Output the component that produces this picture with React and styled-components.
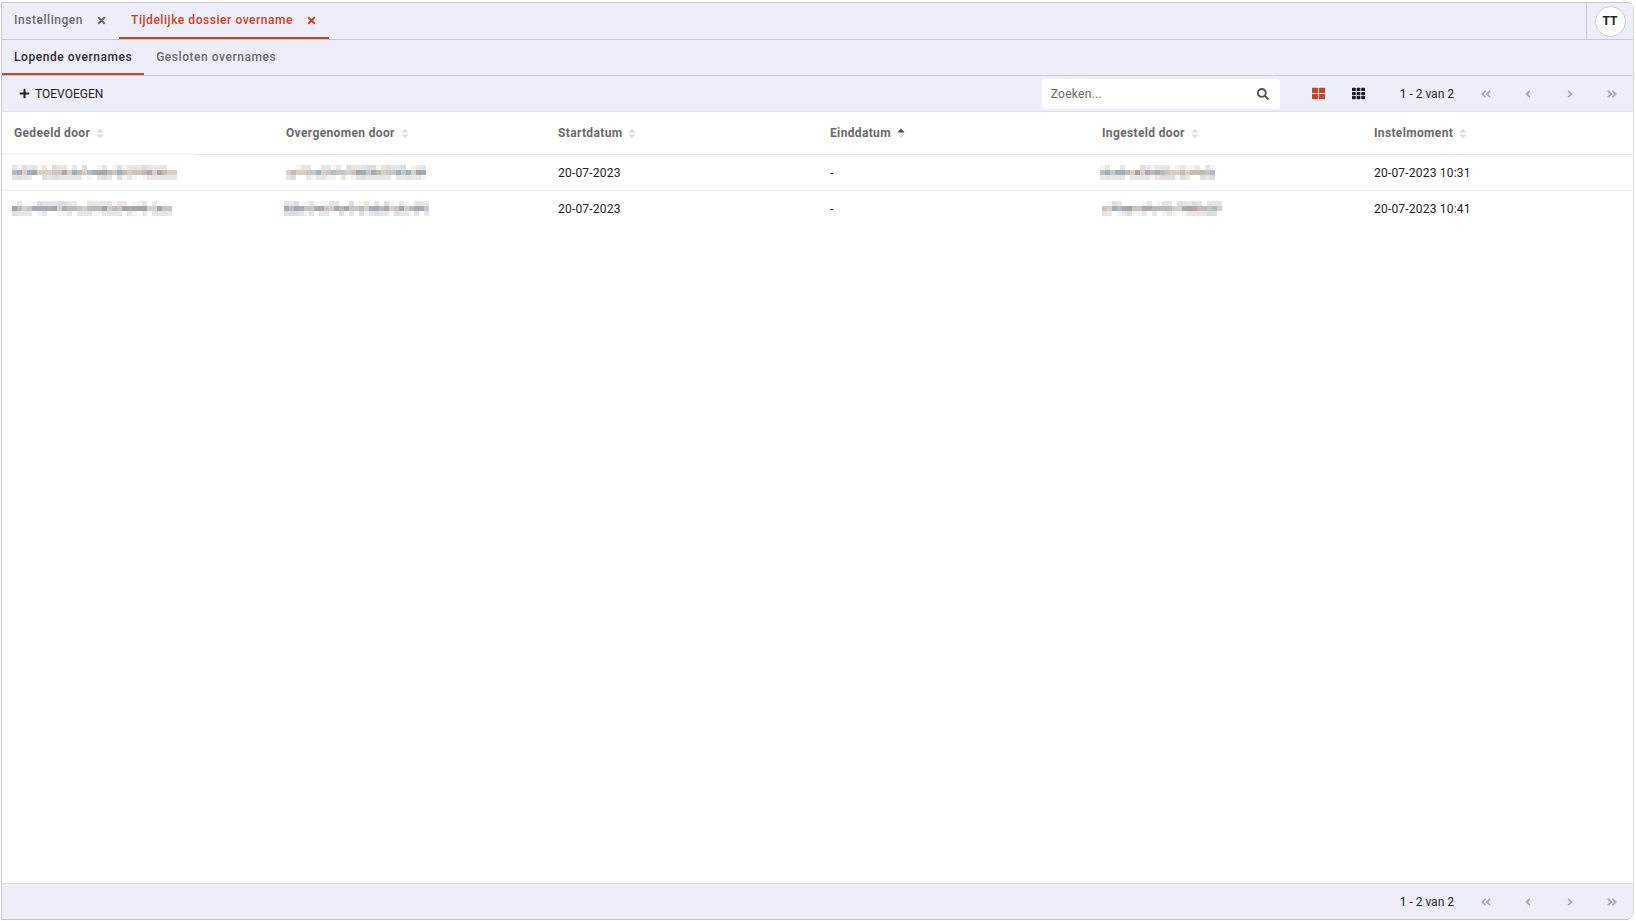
import React from 'react'
import styled, { createGlobalStyle } from 'styled-components'
import {
  FaTimes,
  FaPlus,
  FaSearch,
  FaThLarge,
  FaTh,
  FaAngleDoubleLeft,
  FaAngleDoubleRight,
  FaAngleLeft,
  FaAngleRight,
} from 'react-icons/fa'

const accent = '#c4442a'
const barBg = '#eeeef9'
const lineDark = '#c9c9d6'

const columns = ['Gedeeld door', 'Overgenomen door', 'Startdatum', 'Einddatum', 'Ingesteld door', 'Instelmoment']

const rows = [
  { shared: { seed: 3, left: -2, width: 33 }, taken: { seed: 11, left: 0, width: 28 }, start: '20-07-2023', end: '-', by: { seed: 23, left: -2, width: 23 }, moment: '20-07-2023 10:31' },
  { shared: { seed: 7, left: -2, width: 32 }, taken: { seed: 17, left: -2, width: 29 }, start: '20-07-2023', end: '-', by: { seed: 31, left: 0, width: 24 }, moment: '20-07-2023 10:41' },
]

const Global = createGlobalStyle`
  html, body {
    margin: 0;
    height: 100%;
    background: #fff;
    font-family: Roboto, "Liberation Sans", sans-serif;
    font-size: 12px;
  }
  #root { height: 100%; }
`

const Frame = styled.div`
  box-sizing: border-box;
  height: 918px;
  margin: 2px 2px 0 1px;
  display: flex;
  flex-direction: column;
  border: 1px solid ${lineDark};
  border-right-color: #dcdce4;
  border-bottom-color: #c4c4c8;
  border-radius: 0 6px 8px 0;
  overflow: hidden;
`

const TopBar = styled.div`
  display: flex;
  height: 36px;
  flex: none;
  background: ${barBg};
  border-bottom: 1px solid ${lineDark};
`

const SubBar = styled(TopBar)`
  height: 35px;
`

const Tab = styled.div`
  display: flex;
  align-items: center;
  gap: 13px;
  height: 100%;
  padding: 0 12px;
  box-sizing: border-box;
  color: ${p => (p.$active ? accent : '#6a6a6a')};
  border-bottom: 2px solid ${p => (p.$active ? accent : 'transparent')};
  font-weight: 500;
  font-size: 12px;
  letter-spacing: 0.55px;
  white-space: nowrap;
`

const SubTab = styled(Tab)`
  color: ${p => (p.$active ? '#2b2b30' : '#6a6a6a')};
`

const Close = styled(FaTimes)`
  width: 11px;
  height: 11px;
  color: ${p => (p.$active ? accent : '#666')};
`

const Spacer = styled.div`
  flex: 1;
`

const UserCell = styled.div`
  display: flex;
  align-items: center;
  justify-content: center;
  width: 46px;
  border-left: 1px solid ${lineDark};
`

const Avatar = styled.div`
  display: flex;
  align-items: center;
  justify-content: center;
  width: 31px;
  height: 31px;
  box-sizing: border-box;
  border: 1px solid ${lineDark};
  border-radius: 50%;
  background: #fff;
  color: #222;
  font-weight: 700;
  font-size: 12px;
`

const Toolbar = styled.div`
  display: flex;
  align-items: center;
  height: 36px;
  flex: none;
  box-sizing: border-box;
  background: ${barBg};
  border-bottom: 1px solid #dfdfe8;
`

const AddButton = styled.div`
  display: flex;
  align-items: center;
  gap: 5px;
  margin-left: 17px;
  color: #222;
  font-size: 12px;
`

const Search = styled.div`
  display: flex;
  align-items: center;
  justify-content: space-between;
  width: 238px;
  height: 30px;
  box-sizing: border-box;
  padding: 0 11px 0 9px;
  background: #fff;
  border-radius: 3px;
  color: #666;
  font-size: 12px;
  letter-spacing: 0.3px;
`

const ViewButton = styled.div`
  display: flex;
  margin-left: ${p => p.$gap}px;
  color: ${p => (p.$active ? accent : '#1c1c24')};
`

const PageInfo = styled.div`
  margin-left: ${p => p.$gap}px;
  color: #222;
  font-size: 12px;
  white-space: nowrap;
`

const Pager = styled.div`
  display: flex;
  align-items: center;
  gap: 30px;
  margin: 0 15px 0 26px;
  color: #a9a9b2;
`

const Table = styled.div`
  position: relative;
  flex: 1;
  background: #fff;
`

const Row = styled.div`
  display: grid;
  grid-template-columns: repeat(6, 272px);
  align-items: center;
  height: ${p => p.$height}px;
  box-sizing: border-box;
  border-bottom: 1px solid ${p => p.$line};
`

const HeaderCell = styled.div`
  display: flex;
  align-items: center;
  gap: 6px;
  padding-left: 12px;
  color: #6a6a6a;
  font-weight: 700;
  font-size: 12px;
  letter-spacing: 0.35px;
`

const Cell = styled.div`
  padding-left: 12px;
  color: #222;
  font-size: 12px;
  letter-spacing: 0.2px;
`

const HeaderStreak = styled.div`
  position: absolute;
  left: 1px;
  top: 41px;
  width: 193px;
  height: 2px;
  background: #f5f5f5;
`

const MosaicSvg = styled.svg`
  display: block;
  margin-left: ${p => p.$left}px;
`

const Footer = styled(Toolbar)`
  justify-content: flex-end;
  border-bottom: none;
  border-top: 1px solid #dfdfe8;
`

function SortIcon({ active }) {
  return (
    <svg width="8" height="11" viewBox="0 0 8 11">
      <path d="M4 0.5 7.6 4.6H0.4Z" fill={active ? '#4a4a55' : '#dcdcea'} />
      <path d="M4 10.5 7.6 6.4H0.4Z" fill="#dcdcea" />
    </svg>
  )
}

// blurred names in the screenshot, drawn as a seeded pixel block
function Mosaic({ seed, left, width }) {
  const cells = []
  let n = seed * 7919
  const next = () => {
    n = (n * 1103515245 + 12345) % 2147483648
    return n / 2147483648
  }
  const tints = ['#c9c7c4', '#b4bcc4', '#a9a5a2', '#d6d0c8', '#9fb0bd', '#c2bcb4', '#b0aab0']
  const lights = ['#f3f1ee', '#e6e8ec', '#ebe6e2', '#dedee2', '#f6f4ef', '#e2e6ea']
  for (let x = 0; x < width; x++) {
    const a = next()
    const b = next()
    const c = next()
    cells.push(
      <React.Fragment key={x}>
        {a > 0.3 && <rect x={x * 5} y={0} width={5} height={5} fill={lights[Math.floor(a * 6)]} />}
        <rect x={x * 5} y={5} width={5} height={5} fill={tints[Math.floor(b * 7)]} />
        {c > 0.2 && <rect x={x * 5} y={10} width={5} height={5} fill={lights[Math.floor(c * 6)]} />}
      </React.Fragment>
    )
  }
  return (
    <MosaicSvg $left={left} width={width * 5} height={15} viewBox={`0 0 ${width * 5} 15`}>
      {cells}
    </MosaicSvg>
  )
}

function Paging({ gap }) {
  return (
    <>
      <PageInfo $gap={gap}>1 - 2 van 2</PageInfo>
      <Pager>
        <FaAngleDoubleLeft size={12} />
        <FaAngleLeft size={12} />
        <FaAngleRight size={12} />
        <FaAngleDoubleRight size={12} />
      </Pager>
    </>
  )
}

export default function App() {
  return (
    <>
      <Global />
      <Frame>
        <TopBar>
          <Tab>
            Instellingen
            <Close />
          </Tab>
          <Tab $active>
            Tijdelijke dossier overname
            <Close $active />
          </Tab>
          <Spacer />
          <UserCell>
            <Avatar>TT</Avatar>
          </UserCell>
        </TopBar>
        <SubBar>
          <SubTab $active>Lopende overnames</SubTab>
          <SubTab>Gesloten overnames</SubTab>
        </SubBar>
        <Toolbar>
          <AddButton>
            <FaPlus size={11} />
            TOEVOEGEN
          </AddButton>
          <Spacer />
          <Search>
            Zoeken...
            <FaSearch size={12} color="#555" />
          </Search>
          <ViewButton $active $gap={32}>
            <FaThLarge size={13} />
          </ViewButton>
          <ViewButton $gap={27}>
            <FaTh size={13} />
          </ViewButton>
          <Paging gap={35} />
        </Toolbar>
        <Table>
          <HeaderStreak />
          <Row $height={43} $line="#e2e2ea">
            {columns.map(name => (
              <HeaderCell key={name}>
                {name}
                <SortIcon active={name === 'Einddatum'} />
              </HeaderCell>
            ))}
          </Row>
          {rows.map((row, i) => (
            <Row key={i} $height={36} $line={i === 0 ? '#eeeef5' : 'transparent'}>
              <Cell><Mosaic {...row.shared} /></Cell>
              <Cell><Mosaic {...row.taken} /></Cell>
              <Cell>{row.start}</Cell>
              <Cell>{row.end}</Cell>
              <Cell><Mosaic {...row.by} /></Cell>
              <Cell>{row.moment}</Cell>
            </Row>
          ))}
        </Table>
        <Footer>
          <Paging gap={0} />
        </Footer>
      </Frame>
    </>
  )
}
